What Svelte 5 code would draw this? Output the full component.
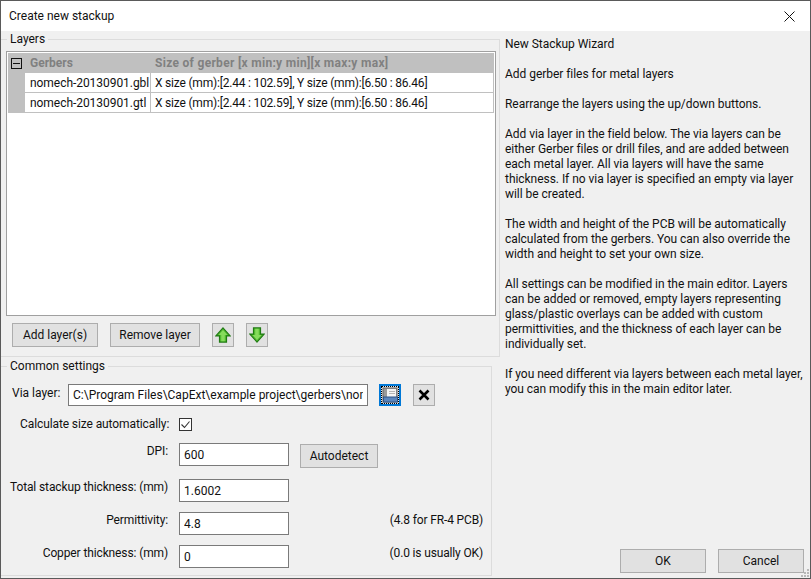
<script lang="ts">
	const layers = [
		{ name: 'nomech-20130901.gbl', size: 'X size (mm):[2.44 : 102.59], Y size (mm):[6.50 : 86.46]' },
		{ name: 'nomech-20130901.gtl', size: 'X size (mm):[2.44 : 102.59], Y size (mm):[6.50 : 86.46]' }
	];

	let viaLayer = $state('C:\\Program Files\\CapExt\\example project\\gerbers\\nomech-20130901.drl');
	let autoSize = $state(true);
	let dpi = $state('600');
	let thickness = $state('1.6002');
	let permittivity = $state('4.8');
	let copper = $state('0');
</script>

<div class="window">
	<header class="titlebar">
		<span>Create new stackup</span>
		<svg class="close" width="11" height="11" viewBox="0 0 11 11" fill="none" stroke="#111" stroke-width="1">
			<path d="M0.5 0.5l10 10M10.5 0.5l-10 10" />
		</svg>
	</header>

	<div class="content">
		<div class="left">
			<fieldset class="layers">
				<legend>Layers</legend>
				<div class="grid-box">
					<div class="table">
						<div class="head">
							<div class="collapse"><span></span></div>
							<div class="col-name">Gerbers</div>
							<div class="col-size">Size of gerber [x min:y min][x max:y max]</div>
						</div>
						{#each layers as layer}
							<div class="row">
								<div class="stub"></div>
								<div class="col-name cell">{layer.name}</div>
								<div class="col-size cell">{layer.size}</div>
							</div>
						{/each}
					</div>
				</div>
				<div class="layer-actions">
					<button class="btn add" type="button">Add layer(s)</button>
					<button class="btn remove" type="button">Remove layer</button>
					<button class="btn icon" type="button" aria-label="Move up">
						<svg width="16" height="16" viewBox="0 0 18 18">
							<path d="M9 1L17 10H13V17H5V10H1z" fill="#4fb82e" stroke="#1f7a12" stroke-width="1.2" />
							<path d="M9 3.5L14 9H11V16H7V9H4z" fill="#86dc5c" />
						</svg>
					</button>
					<button class="btn icon" type="button" aria-label="Move down">
						<svg width="16" height="16" viewBox="0 0 18 18">
							<path d="M9 17L17 8H13V1H5V8H1z" fill="#4fb82e" stroke="#1f7a12" stroke-width="1.2" />
							<path d="M7 2H11V9H14L9 14.5L4 9H7z" fill="#86dc5c" />
						</svg>
					</button>
				</div>
			</fieldset>

			<fieldset class="common">
				<legend>Common settings</legend>
				<div class="via-row">
					<span class="via-label">Via layer:</span>
					<input class="via-input" type="text" bind:value={viaLayer} />
					<button class="btn icon browse" type="button" aria-label="Browse">
						<svg width="18" height="18" viewBox="0 0 18 18">
							<rect x="2" y="2" width="14" height="14" fill="#9a9a9a" stroke="#666" />
							<rect x="6" y="3" width="9" height="8" fill="#f4f4f4" />
							<path d="M8 5.5h6M8 7.5h6" stroke="#b5b5b5" />
							<rect x="2.5" y="11" width="14" height="5" fill="#5b86bd" stroke="#2f5588" />
						</svg>
					</button>
					<button class="btn icon clear" type="button" aria-label="Clear">
						<svg width="14" height="14" viewBox="0 0 14 14">
							<path d="M2.5 2.5l9 9M11.5 2.5l-9 9" stroke="#000" stroke-width="2.6" />
						</svg>
					</button>
				</div>

				<div class="check-row">
					<span>Calculate size automatically:</span>
					<label class="check">
						<input type="checkbox" bind:checked={autoSize} />
						<svg width="13" height="13" viewBox="0 0 13 13">
							<rect x="0.5" y="0.5" width="12" height="12" fill="#fff" stroke="#333" />
							<path d="M2.5 6.5l3 3 5-6" fill="none" stroke="#333" stroke-width="1.1" />
						</svg>
					</label>
				</div>

				<div class="form">
					<span class="lbl">DPI:</span>
					<input class="field" type="text" bind:value={dpi} />
					<button class="btn autodetect" type="button">Autodetect</button>
					<span></span>

					<span class="lbl">Total stackup thickness: (mm)</span>
					<input class="field" type="text" bind:value={thickness} />
					<span></span>
					<span></span>

					<span class="lbl">Permittivity:</span>
					<input class="field" type="text" bind:value={permittivity} />
					<span></span>
					<span class="hint">(4.8 for FR-4 PCB)</span>

					<span class="lbl">Copper thickness: (mm)</span>
					<input class="field" type="text" bind:value={copper} />
					<span></span>
					<span class="hint">(0.0 is usually OK)</span>
				</div>
			</fieldset>
		</div>

		<aside class="help">
			<div class="help-text">
				<p>New Stackup Wizard</p>
				<p>Add gerber files for metal layers</p>
				<p>Rearrange the layers using the up/down buttons.</p>
				<p>Add via layer in the field below. The via layers can be<br />either Gerber files or drill files, and are added between<br />each metal layer. All via layers will have the same<br />thickness. If no via layer is specified an empty via layer<br />will be created.</p>
				<p>The width and height of the PCB will be automatically<br />calculated from the gerbers. You can also override the<br />width and height to set your own size.</p>
				<p>All settings can be modified in the main editor. Layers<br />can be added or removed, empty layers representing<br />glass/plastic overlays can be added with custom<br />permittivities, and the thickness of each layer can be<br />individually set.</p>
				<p>If you need different via layers between each metal layer,<br />you can modify this in the main editor later.</p>
			</div>
			<div class="dialog-actions">
				<button class="btn dialog" type="button">OK</button>
				<button class="btn dialog" type="button">Cancel</button>
			</div>
		</aside>
	</div>

	<svg class="grip" width="9" height="9" viewBox="0 0 9 9" fill="#b8b8b8">
		<rect x="6" y="0" width="2" height="2" />
		<rect x="3" y="3" width="2" height="2" />
		<rect x="6" y="3" width="2" height="2" />
		<rect x="0" y="6" width="2" height="2" />
		<rect x="3" y="6" width="2" height="2" />
		<rect x="6" y="6" width="2" height="2" />
	</svg>
</div>

<style>
	:global(body) {
		background: #6b6b5a;
		font-family: Roboto, "Noto Sans", sans-serif;
		font-size: 12px;
		color: #111;
	}

	.window {
		position: relative;
		width: 811px;
		height: 579px;
		box-sizing: border-box;
		display: flex;
		flex-direction: column;
		background: #f0f0f0;
		border: 1px solid #5a5a5a;
	}

	.grip {
		position: absolute;
		right: 0;
		bottom: 0;
	}

	.titlebar {
		height: 30px;
		flex: none;
		background: #fff;
		display: flex;
		align-items: center;
		justify-content: space-between;
		padding: 0 15px 0 8px;
	}

	.content {
		flex: 1;
		display: flex;
		min-height: 0;
	}

	.left {
		width: 499px;
		flex: none;
		display: flex;
		flex-direction: column;
		padding-top: 1px;
	}

	fieldset {
		margin: 0;
		padding: 0;
		border: 1px solid #dcdcdc;
		min-width: 0;
	}

	legend {
		padding: 0 3px;
		line-height: 15px;
	}

	.layers legend {
		margin-left: 1px;
	}

	.common legend {
		margin-left: 6px;
	}

	.layers {
		height: 325px;
		box-sizing: border-box;
		padding: 4px 3px 0 5px;
		border-left: none;
	}

	.grid-box {
		height: 265px;
		box-sizing: border-box;
		background: #fff;
		border: 1px solid #a0a0a0;
		padding: 1px;
	}

	.table {
		background: #c0c0c0;
	}

	.head, .row {
		display: flex;
		height: 20px;
		line-height: 20px;
	}

	.head {
		color: #808080;
		font-weight: 700;
	}

	.head .col-size {
		letter-spacing: 0.3px;
	}

	.collapse {
		width: 17px;
		display: flex;
		align-items: center;
		justify-content: center;
	}

	.collapse span {
		width: 9px;
		height: 9px;
		border: 1px solid #111;
		background: linear-gradient(#111, #111) center / 7px 1px no-repeat;
	}

	.stub {
		width: 17px;
	}

	.col-name {
		width: 126px;
		box-sizing: border-box;
		padding-left: 5px;
	}

	.row .col-name {
		letter-spacing: -0.05px;
	}

	.col-size {
		flex: 1;
		padding-left: 4px;
		white-space: nowrap;
		overflow: hidden;
	}

	.row .col-size {
		letter-spacing: -0.2px;
	}

	.cell {
		background: #fff;
		border-right: 1px solid #c0c0c0;
		border-bottom: 1px solid #c0c0c0;
		box-sizing: border-box;
		white-space: nowrap;
	}

	.layer-actions {
		display: flex;
		align-items: center;
		gap: 12px;
		padding: 7px 0 0 6px;
	}

	.btn {
		font: inherit;
		color: #111;
		background: #e1e1e1;
		border: 1px solid #adadad;
		border-radius: 0;
		padding: 0;
		height: 24px;
		display: flex;
		align-items: center;
		justify-content: center;
	}

	.add { width: 86px; }
	.remove { width: 90px; }
	.icon { width: 22px; height: 24px; }

	.common {
		flex: 1;
		margin: 2px 8px 2px 0;
		padding: 10px 0 0 0;
		border-left: none;
	}

	.via-row {
		display: flex;
		align-items: center;
		padding-left: 11px;
	}

	.via-label {
		width: 56px;
		flex: none;
		margin-top: -4px;
	}

	input[type="text"] {
		font: inherit;
		color: #111;
		background: #fff;
		border: 1px solid #7a7a7a;
		border-radius: 0;
		box-sizing: border-box;
		height: 23px;
		padding: 0 4px;
		outline: none;
	}

	.via-input {
		width: 300px;
		height: 22px !important;
	}

	.via-row .icon {
		height: 22px;
	}

	.browse {
		width: 22px;
		margin-left: 11px;
		border: 2px solid #0078d7;
	}

	.browse svg {
		outline: 1px dotted #000;
		outline-offset: -1px;
	}

	.clear {
		margin-left: 12px;
	}

	.check-row {
		display: flex;
		align-items: center;
		gap: 10px;
		padding: 11px 0 0 19px;
		letter-spacing: -0.1px;
	}

	.check {
		display: flex;
	}

	.check input {
		display: none;
	}

	.form {
		display: grid;
		grid-template-columns: 167px 110px 89px 1fr;
		row-gap: 10px;
		align-items: start;
		padding-top: 12px;
	}

	.lbl {
		text-align: right;
		white-space: nowrap;
		line-height: 15px;
		margin-top: 1px;
		letter-spacing: -0.12px;
	}

	.field {
		width: 110px;
		margin-left: 11px;
	}

	.autodetect {
		width: 78px;
		margin: 1px 0 1px 22px;
	}

	.hint {
		text-align: right;
		white-space: nowrap;
		line-height: 15px;
		margin-top: 1px;
		padding-right: 8px;
		letter-spacing: -0.15px;
	}

	.help {
		flex: 1;
		display: flex;
		flex-direction: column;
		justify-content: space-between;
		padding: 6px 6px 3px 5px;
		line-height: 15px;
		min-width: 0;
	}

	.help-text p {
		margin: 0 0 15px;
		white-space: nowrap;
		letter-spacing: -0.04px;
	}

	.dialog-actions {
		display: flex;
		justify-content: flex-end;
		gap: 12px;
		padding-bottom: 2px;
	}

	.dialog {
		width: 86px;
	}
</style>
